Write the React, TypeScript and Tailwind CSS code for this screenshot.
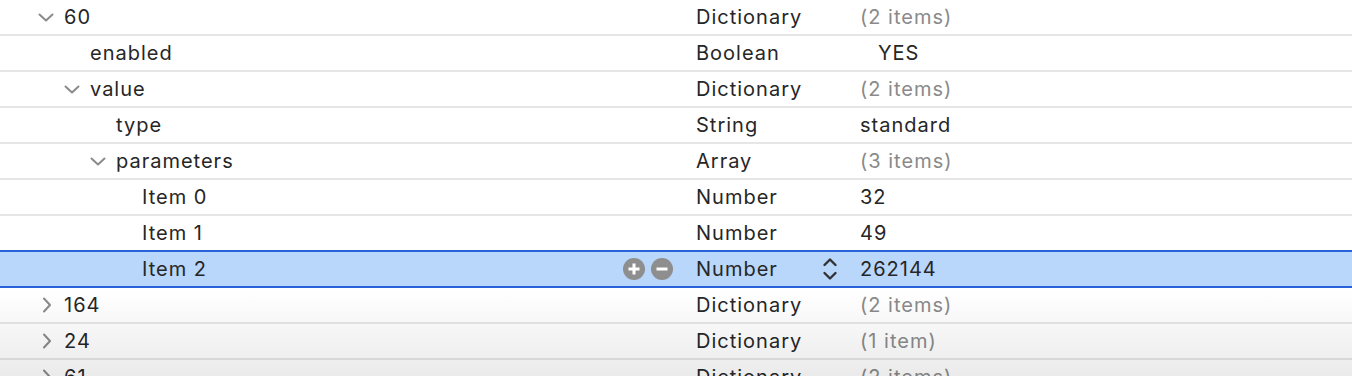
type Row = {
    level: number
    name: string
    open?: boolean
    closed?: boolean
    type: string
    value: string
    muted?: boolean
    selected?: boolean
    bool?: boolean
}

const rows: Row[] = [
    { level: 0, name: "60", open: true, type: "Dictionary", value: "(2 items)", muted: true },
    { level: 1, name: "enabled", type: "Boolean", value: "YES", bool: true },
    { level: 1, name: "value", open: true, type: "Dictionary", value: "(2 items)", muted: true },
    { level: 2, name: "type", type: "String", value: "standard" },
    { level: 2, name: "parameters", open: true, type: "Array", value: "(3 items)", muted: true },
    { level: 3, name: "Item 0", type: "Number", value: "32" },
    { level: 3, name: "Item 1", type: "Number", value: "49" },
    { level: 3, name: "Item 2", type: "Number", value: "262144", selected: true },
    { level: 0, name: "164", closed: true, type: "Dictionary", value: "(2 items)", muted: true },
    { level: 0, name: "24", closed: true, type: "Dictionary", value: "(1 item)", muted: true },
    { level: 0, name: "61", closed: true, type: "Dictionary", value: "(2 items)", muted: true },
]

const indent = ["pl-[38px]", "pl-[64px]", "pl-[90px]", "pl-[116px]"]

function Chevron({ open }: { open?: boolean }) {
    return (
        <svg width="16" height="16" viewBox="0 0 16 16" className="shrink-0">
            {open ? (
                <path d="M1.5 5.5 L8 11.5 L14.5 5.5" fill="none" stroke="#8a8a8a" strokeWidth="2" strokeLinecap="round" strokeLinejoin="round" />
            ) : (
                <path d="M6 1.5 L12 8 L6 14.5" fill="none" stroke="#8a8a8a" strokeWidth="2" strokeLinecap="round" strokeLinejoin="round" />
            )}
        </svg>
    )
}

function RoundButton({ minus }: { minus?: boolean }) {
    return (
        <svg width="22" height="22" viewBox="0 0 22 22">
            <circle cx="11" cy="11" r="11" fill="#8e8e8e" />
            <path d={minus ? "M5.5 11 H16.5" : "M5.5 11 H16.5 M11 5.5 V16.5"} stroke="#fff" strokeWidth="3" />
        </svg>
    )
}

function Stepper() {
    return (
        <svg width="16" height="24" viewBox="0 0 16 24">
            <path d="M2.5 8 L8 2.5 L13.5 8 M2.5 16 L8 21.5 L13.5 16" fill="none" stroke="#333" strokeWidth="2.4" strokeLinecap="round" strokeLinejoin="round" />
        </svg>
    )
}

export default function App() {
    return (
        <div className="relative h-[376px] w-[1352px] overflow-hidden bg-white text-[20px] tracking-[1px] text-[#262626]" style={{ fontFamily: "Inter, 'Noto Sans', sans-serif" }}>
            <div className="flex flex-col">
                {rows.map((row) => (
                    <div
                        key={row.name + row.level}
                        className={
                            row.selected
                                ? "-mt-[2px] flex h-[38px] items-center border-y-2 border-[#2a63d9] bg-[#b9d6fb]"
                                : "flex h-[36px] items-center border-b-2 border-[#e6e6e6]"
                        }
                    >
                        <div className={`flex w-[696px] items-center ${indent[row.level]}`}>
                            <div className="flex w-[26px] items-center">
                                {(row.open || row.closed) && <Chevron open={row.open} />}
                            </div>
                            <span className="flex-1">{row.name}</span>
                            {row.selected && (
                                <div className="mr-[23px] flex gap-[6px]">
                                    <RoundButton />
                                    <RoundButton minus />
                                </div>
                            )}
                        </div>
                        <div className="flex w-[164px] items-center">
                            <span className="flex-1">{row.type}</span>
                            {row.selected && (
                                <div className="mr-[22px] flex items-center">
                                    <Stepper />
                                </div>
                            )}
                        </div>
                        <span className={row.muted ? "text-[#8a8a8a]" : row.bool ? "pl-[18px]" : ""}>{row.value}</span>
                    </div>
                ))}
            </div>
            <div className="pointer-events-none absolute inset-x-0 bottom-0 h-[86px] bg-gradient-to-b from-transparent to-black/[0.08]" />
        </div>
    )
}
